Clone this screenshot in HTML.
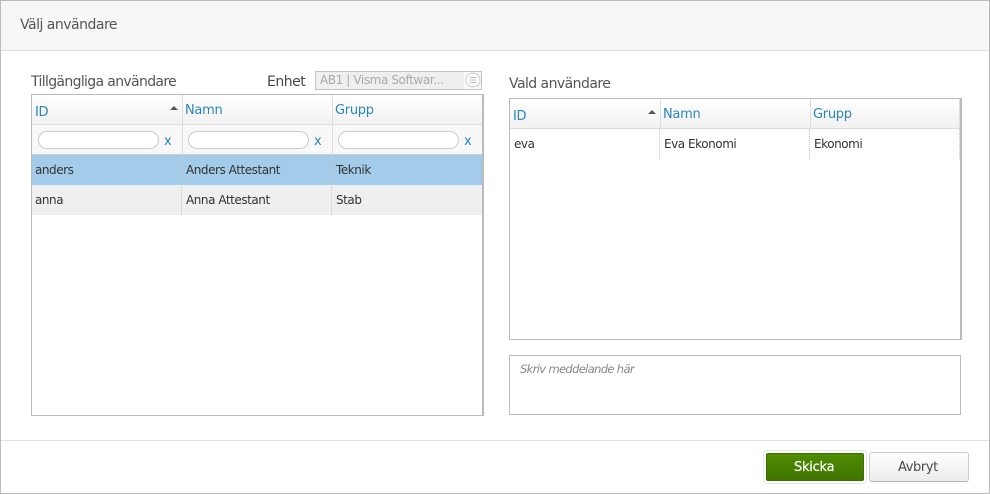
<!DOCTYPE html>
<html><head><meta charset="utf-8"><style>
html,body{margin:0;padding:0;background:#fff}
#p{position:relative;width:990px;height:494px;overflow:hidden;background:#fff;font-family:"DejaVu Sans","Liberation Sans",sans-serif;color:#333}
#p div,#p span.t{position:absolute;box-sizing:border-box}
.t{white-space:nowrap;line-height:16px}
.h{font-size:13px;color:#555;letter-spacing:-.35px}
.b{font-size:12px;color:#333;letter-spacing:-.45px}
.l{font-size:13px;color:#2a85bd;letter-spacing:-.3px}
.hb{background:linear-gradient(#fff,#f1f1f1)}
.i{height:18px;width:121px;border:1px solid #ccc;border-radius:9px;background:#fff}
.x{font-size:13px;color:#2a85bd}
.s{width:1px;background:#ddd}
.d{width:0;border-left:1px dotted #c4c4c4}
.a{width:0;height:0;border-left:4px solid transparent;border-right:4px solid transparent;border-bottom:4px solid #555}
</style></head><body><div id="p">
<div style="left:0;top:0;width:990px;height:494px;border:1px solid #bbb"></div>
<div style="left:1px;top:1px;width:988px;height:50px;background:#f7f7f7;border-bottom:1px solid #ddd"></div>
<span class="t h" style="left:20px;top:17px;font-size:14px;letter-spacing:-.5px">Välj användare</span>

<span class="t h" style="left:31px;top:74px;font-size:14px;letter-spacing:-.65px">Tillgängliga användare</span>
<span class="t h" style="left:267px;top:74px;font-size:14px;letter-spacing:-.5px;color:#444">Enhet</span>
<div style="left:315px;top:71px;width:167px;height:19px;border:1px solid #c4c4c4;background:#efefef"></div>
<div style="left:464px;top:72px;width:17px;height:17px;background:#fafafa"></div>
<span class="t" style="left:320px;top:72px;font-size:12px;color:#aaa;letter-spacing:-.4px">AB1 | Visma Softwar...</span>
<svg style="position:absolute;left:465px;top:72px" width="16" height="16" viewBox="0 0 16 16"><circle cx="8" cy="8" r="7" fill="#fff" stroke="#ccc"/><path d="M4.500 5.500h7M4.500 8h7M4.500 10.500h7" stroke="#bbb" fill="none"/></svg>

<!-- left grid -->
<div style="left:31px;top:94px;width:453px;height:322px;border:1px solid #bbb;border-right-width:2px;background:#fff"></div>
<div class="hb" style="left:32px;top:95px;width:450px;height:30px;border-bottom:1px solid #ddd"></div>
<div style="left:32px;top:125px;width:450px;height:30px;background:#f8f8f8;border-bottom:1px solid #ccc"></div>
<div style="left:32px;top:155px;width:450px;height:30px;background:#a3cbea"></div>
<div style="left:32px;top:185px;width:450px;height:30px;background:#efefef"></div>
<div class="s" style="left:182px;top:95px;height:60px"></div>
<div class="s" style="left:332px;top:95px;height:60px"></div>
<div class="d" style="left:181px;top:155px;height:60px"></div>
<div class="d" style="left:331px;top:155px;height:60px"></div>
<span class="t l" style="left:35px;top:105px">ID</span>
<div class="a" style="left:170px;top:106px"></div>
<span class="t l" style="left:185px;top:103px">Namn</span>
<span class="t l" style="left:335px;top:103px">Grupp</span>
<div class="i" style="left:38px;top:131px"></div>
<div class="i" style="left:188px;top:131px"></div>
<div class="i" style="left:338px;top:131px"></div>
<span class="t x" style="left:164px;top:134px">x</span>
<span class="t x" style="left:314px;top:134px">x</span>
<span class="t x" style="left:464px;top:134px">x</span>
<span class="t b" style="left:35px;top:162px">anders</span>
<span class="t b" style="left:186px;top:162px">Anders Attestant</span>
<span class="t b" style="left:336px;top:162px">Teknik</span>
<span class="t b" style="left:35px;top:192px">anna</span>
<span class="t b" style="left:186px;top:192px">Anna Attestant</span>
<span class="t b" style="left:336px;top:192px">Stab</span>

<!-- right grid -->
<span class="t h" style="left:509px;top:76px;font-size:14px;letter-spacing:-.55px">Vald användare</span>
<div style="left:509px;top:98px;width:453px;height:242px;border:1px solid #bbb;border-right-width:2px;background:#fff"></div>
<div class="hb" style="left:510px;top:99px;width:450px;height:30px;border-bottom:1px solid #ddd"></div>
<div class="s" style="left:660px;top:99px;height:30px"></div>
<div class="s" style="left:810px;top:99px;height:30px"></div>
<div class="s" style="left:959px;top:99px;height:30px"></div>
<div class="d" style="left:659px;top:129px;height:30px"></div>
<div class="d" style="left:809px;top:129px;height:30px"></div>
<div class="d" style="left:959px;top:129px;height:30px"></div>
<span class="t l" style="left:513px;top:109px">ID</span>
<div class="a" style="left:648px;top:110px"></div>
<span class="t l" style="left:663px;top:107px">Namn</span>
<span class="t l" style="left:813px;top:107px">Grupp</span>
<span class="t b" style="left:514px;top:136px">eva</span>
<span class="t b" style="left:664px;top:136px">Eva Ekonomi</span>
<span class="t b" style="left:814px;top:136px">Ekonomi</span>

<div style="left:509px;top:355px;width:452px;height:60px;border:1px solid #bbb;background:#fff"></div>
<span class="t" style="left:520px;top:361px;font-size:11.500px;font-style:italic;color:#888;letter-spacing:-.65px">Skriv meddelande här</span>

<!-- footer -->
<div style="left:1px;top:440px;width:988px;height:1px;background:#e2e2e2"></div>
<div style="left:763px;top:450px;width:104px;height:34px;border:1px solid #e6e6e6;border-radius:4px;background:#fff"></div>
<div style="left:766px;top:453px;width:98px;height:28px;border-radius:2px;background:linear-gradient(#4f8c00,#3f7400);border:1px solid #3c6e00"></div>
<span class="t" style="left:794px;top:460px;font-size:13px;font-weight:400;color:#fff;letter-spacing:-.25px;-webkit-text-stroke:.2px #fff">Skicka</span>
<div style="left:869px;top:452px;width:100px;height:30px;border:1px solid #ccc;border-bottom-color:#b5b5b5;border-radius:3px;background:linear-gradient(#fff,#ececec)"></div>
<span class="t" style="left:898px;top:460px;font-size:13px;color:#4a4a4a;letter-spacing:-.4px">Avbryt</span>
</div></body></html>
